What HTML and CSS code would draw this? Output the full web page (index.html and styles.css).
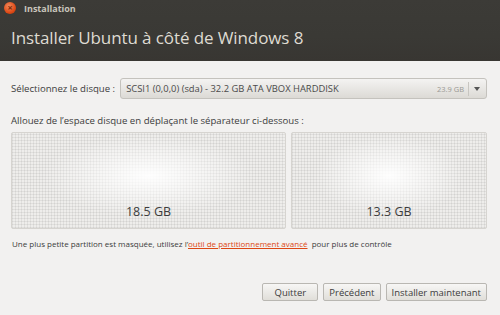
FILE: index.html
```html
<!DOCTYPE html>
<html lang="fr">
<head>
    <meta charset="UTF-8">
    <title>Installation</title>
    <link rel="stylesheet" href="styles.css">
</head>
<body>
    <div class="window">
        <header class="top">
            <div class="titlebar">
                <span class="close">&#215;</span>
                <span class="wintitle">Installation</span>
            </div>
            <h1>Installer Ubuntu à côté de Windows 8</h1>
        </header>
        <main class="content">
            <div class="disk-row">
                <label>Sélectionnez le disque :</label>
                <div class="combo">
                    <span class="combo-text">SCSI1 (0,0,0) (sda) - 32.2 GB ATA VBOX HARDDISK</span>
                    <span class="combo-size">23.9 GB</span>
                    <span class="combo-arrow"></span>
                </div>
            </div>
            <p class="hint">Allouez de l’espace disque en déplaçant le séparateur ci-dessous :</p>
            <div class="parts">
                <div class="part part-left"><span>18.5 GB</span></div>
                <div class="part part-right"><span>13.3 GB</span></div>
            </div>
            <p class="note">Une plus petite partition est masquée, utilisez l’<a href="#">outil de partitionnement avancé</a> &nbsp;pour plus de contrôle</p>
            <div class="buttons">
                <button class="btn-quit">Quitter</button>
                <button>Précédent</button>
                <button>Installer maintenant</button>
            </div>
        </main>
    </div>
</body>
</html>
```

FILE: styles.css
```css
/* General */
body {
    margin: 0;
    font-family: "Open Sans", "DejaVu Sans", sans-serif;
    background-color: #f2f1f0;
}
.window {
    width: 500px;
    height: 315px;
    display: flex;
    flex-direction: column;
    overflow: hidden;
}
/* Dark header */
.top {
    height: 61px;
    background: linear-gradient(#3c3b37, #3a3935 60%, #383632);
    color: #dfdbd2;
}
.titlebar {
    display: flex;
    align-items: center;
    height: 16px;
    padding: 0 0 0 4px;
}
.close {
    width: 12px;
    height: 12px;
    border-radius: 50%;
    background: radial-gradient(circle at 40% 35%, #f08a5d, #df4a16 60%, #a8340c);
    color: #7a2a0a;
    font-size: 9px;
    line-height: 12px;
    text-align: center;
    font-weight: bold;
}
.wintitle {
    margin-left: 8px;
    font-size: 9px;
    font-weight: bold;
    color: #c9c5bc;
}
h1 {
    margin: 10px 0 0 11px;
    font-size: 17px;
    font-weight: normal;
    letter-spacing: -0.1px;
}
/* Body */
.content {
    flex: 1;
    padding: 17px 13px 0 11px;
    font-size: 9.6px;
    color: #3c3c3c;
}
.disk-row {
    display: flex;
    align-items: center;
    gap: 5px;
}
.combo {
    flex: 1;
    height: 19px;
    display: flex;
    align-items: center;
    border: 1px solid #c4c2bd;
    border-radius: 3px;
    background: linear-gradient(#f4f3f2, #dcdad5);
    padding-left: 5px;
    font-size: 9.4px;
    color: #4a4a4a;
}
.combo-text {
    flex: 1;
}
.combo-size {
    font-size: 7.5px;
    color: #9a9893;
    padding-right: 4px;
    line-height: 14px;
    border-right: 1px solid #c8c6c1;
}
.combo-arrow {
    width: 0;
    height: 0;
    margin: 0 6px 0 5px;
    border-left: 3px solid transparent;
    border-right: 3px solid transparent;
    border-top: 4px solid #555;
}
.hint {
    margin: 15px 0 5px;
}
.parts {
    display: flex;
    gap: 5px;
    height: 97px;
}
.part {
    display: flex;
    align-items: flex-end;
    justify-content: center;
    padding-bottom: 8px;
    box-sizing: border-box;
    border: 1px solid #d6d4d0;
    border-radius: 2px;
    font-size: 12.5px;
    color: #3c3c3c;
    background-color: #eeedeb;
    background-image:
        radial-gradient(ellipse at 50% 45%, rgba(255,255,255,0.95), rgba(255,255,255,0) 55%),
        repeating-linear-gradient(90deg, rgba(0,0,0,0.06) 0 1px, transparent 1px 3px),
        repeating-linear-gradient(0deg, rgba(0,0,0,0.06) 0 1px, transparent 1px 3px);
}
.part-left {
    width: 275px;
}
.part-right {
    flex: 1;
}
.note {
    margin: 9px 0 0 1px;
    font-size: 8px;
}
.note a {
    color: #dd4814;
}
.buttons {
    display: flex;
    justify-content: flex-end;
    gap: 5px;
    margin-top: 34px;
}
.buttons button {
    font-family: inherit;
    font-size: 9.5px;
    color: #3c3c3c;
    height: 18px;
    padding: 0 5px;
    border: 1px solid #b9b7b2;
    border-radius: 2px;
    background: linear-gradient(#f7f6f5, #e0ded9);
}
.buttons .btn-quit {
    width: 56px;
}
```
